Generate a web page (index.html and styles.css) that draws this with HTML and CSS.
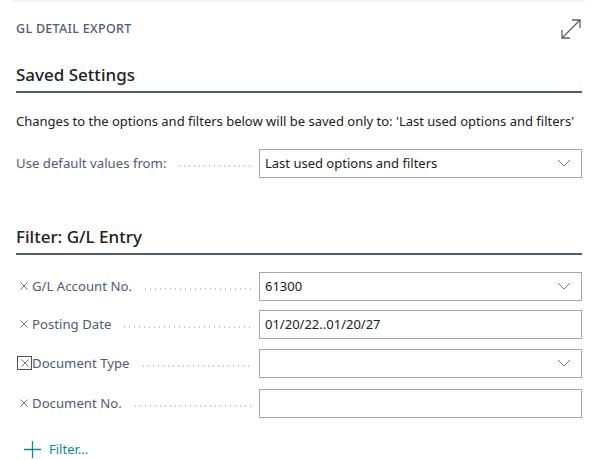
FILE: index.html
```html
<!DOCTYPE html>
<html lang="en">
<head>
<meta charset="utf-8">
<title>GL Detail Export</title>
<link rel="stylesheet" href="styles.css">
</head>
<body>
<div class="topline"></div>
<div class="page">
  <header class="header">
    <div class="title">GL DETAIL EXPORT</div>
    <svg class="expand" width="22" height="22" viewBox="0 0 22 22" aria-hidden="true">
      <path d="M2 20 L20 2 M12 2 H20 V10 M2 12 V20 H10" fill="none" stroke="#616161" stroke-width="1.3"/>
    </svg>
  </header>

  <section class="group">
    <h2 class="group-title">Saved Settings</h2>
    <p class="desc">Changes to the options and filters below will be saved only to: 'Last used options and filters'</p>
    <div class="row row-first">
      <div class="label"><span class="label-text plain">Use default values from:</span><span class="dots"></span></div>
      <div class="input select"><span class="value">Last used options and filters</span>
        <svg class="chev" width="14" height="8" viewBox="0 0 14 8"><path d="M1 1 L7 7 L13 1" fill="none" stroke="#757575" stroke-width="1"/></svg>
      </div>
    </div>
  </section>

  <section class="group group-filter">
    <h2 class="group-title">Filter: G/L Entry</h2>
    <div class="rows">
      <div class="row">
        <div class="label"><span class="x"><svg width="8" height="8" viewBox="0 0 8 8"><path d="M0.5 0.5 L7.5 7.5 M7.5 0.5 L0.5 7.5" stroke="#757575" stroke-width="1"/></svg></span><span class="label-text">G/L Account No.</span><span class="dots"></span></div>
        <div class="input select"><span class="value">61300</span>
          <svg class="chev" width="14" height="8" viewBox="0 0 14 8"><path d="M1 1 L7 7 L13 1" fill="none" stroke="#757575" stroke-width="1"/></svg>
        </div>
      </div>
      <div class="row">
        <div class="label"><span class="x"><svg width="8" height="8" viewBox="0 0 8 8"><path d="M0.5 0.5 L7.5 7.5 M7.5 0.5 L0.5 7.5" stroke="#757575" stroke-width="1"/></svg></span><span class="label-text">Posting Date</span><span class="dots"></span></div>
        <div class="input"><span class="value">01/20/22..01/20/27</span></div>
      </div>
      <div class="row row-tall">
        <div class="label"><span class="x x-focus"><svg width="8" height="8" viewBox="0 0 8 8"><path d="M0.5 0.5 L7.5 7.5 M7.5 0.5 L0.5 7.5" stroke="#757575" stroke-width="1"/></svg></span><span class="label-text">Document Type</span><span class="dots"></span></div>
        <div class="input select"><span class="value"></span>
          <svg class="chev" width="14" height="8" viewBox="0 0 14 8"><path d="M1 1 L7 7 L13 1" fill="none" stroke="#757575" stroke-width="1"/></svg>
        </div>
      </div>
      <div class="row row-tall">
        <div class="label"><span class="x"><svg width="8" height="8" viewBox="0 0 8 8"><path d="M0.5 0.5 L7.5 7.5 M7.5 0.5 L0.5 7.5" stroke="#757575" stroke-width="1"/></svg></span><span class="label-text">Document No.</span><span class="dots"></span></div>
        <div class="input"><span class="value"></span></div>
      </div>
    </div>
    <div class="add-filter">
      <svg width="17" height="17" viewBox="0 0 17 17"><path d="M8.5 0 V17 M0 8.5 H17" stroke="#0c8a8f" stroke-width="1.3"/></svg>
      <span>Filter...</span>
    </div>
  </section>
</div>
</body>
</html>
```

FILE: styles.css
```css
* { box-sizing: border-box; }
html, body { margin: 0; padding: 0; background: #ffffff; }
body {
  font-family: "Noto Sans", "Open Sans", "Liberation Sans", sans-serif;
  color: #212121;
  width: 595px;
  height: 460px;
  overflow: hidden;
}
.topline {
  height: 2px;
  margin: 0 10px 0 12px;
  background: #f3f3f3;
}
.page {
  padding: 0 13px 0 16px;
}
.header {
  display: flex;
  justify-content: space-between;
  align-items: center;
  height: 54px;
  padding-bottom: 2px;
}
.title {
  font-size: 12.5px;
  font-weight: 500;
  letter-spacing: 0.3px;
  color: #505c6d;
}
.expand { margin-top: 2px; }
.group-title {
  margin: 0;
  font-size: 17px;
  font-weight: 500;
  color: #212121;
  padding: 7px 0 4px;
  border-bottom: 2px solid #505c6d;
  line-height: 24px;
}
.desc {
  margin: 19px 0 0;
  font-size: 13px;
  line-height: 18px;
  white-space: nowrap;
}
.row {
  display: flex;
  align-items: center;
  height: 38px;
}
.row-tall { height: 40px; }
.row-first { margin-top: 14px; }
.label {
  width: 243px;
  display: flex;
  align-items: center;
  font-size: 13.2px;
  color: #505c6d;
  padding-right: 8px;
}
.label-text { white-space: nowrap; }
.dots {
  flex: 1;
  height: 2px;
  margin: 5px 0 0 11px;
  background-image: radial-gradient(circle, #c8c8c8 0.8px, transparent 1px);
  background-size: 5px 2px;
  background-repeat: repeat-x;
}
.x {
  width: 16px;
  height: 14px;
  display: inline-flex;
  align-items: center;
  justify-content: center;
}
.x-focus {
  border: 1px solid #505050;
  width: 15px;
  margin-left: 1px;
}
.input {
  flex: 1;
  height: 29px;
  border: 1px solid #a8a8a8;
  display: flex;
  align-items: center;
  padding: 0 10px 0 5px;
  font-size: 13px;
  color: #212121;
}
.value { flex: 1; white-space: nowrap; }
.group-filter { margin-top: 36px; }
.rows { margin-top: 12px; }
.add-filter {
  display: flex;
  align-items: center;
  gap: 8px;
  margin: 17px 0 0 8px;
  color: #0c8a8f;
  font-size: 13px;
}
```
